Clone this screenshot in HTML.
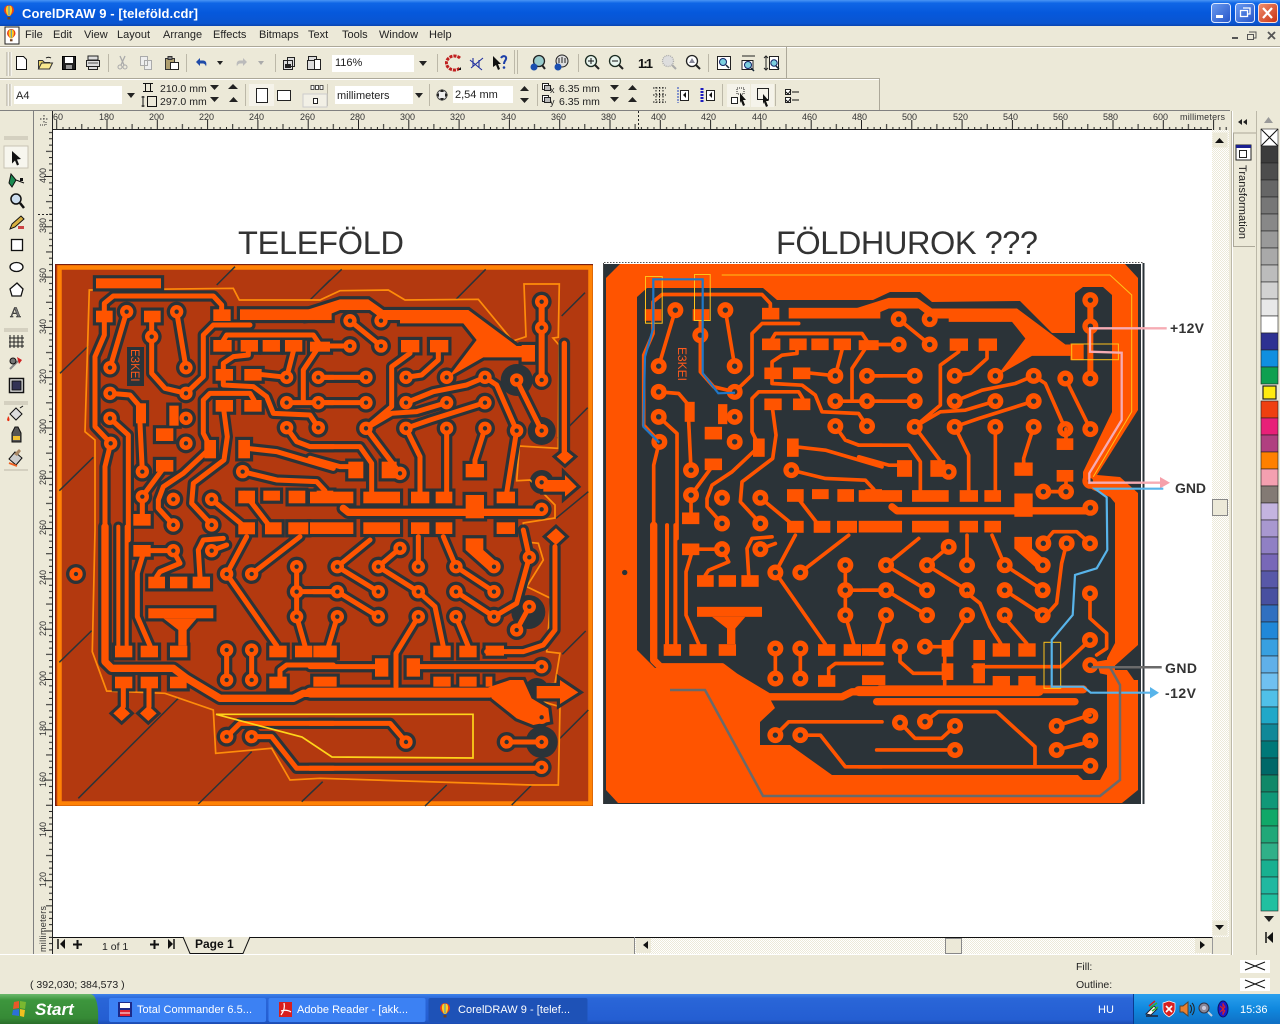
<!DOCTYPE html>
<html><head><meta charset="utf-8"><title>CorelDRAW 9</title>
<style>
html,body{margin:0;padding:0;width:1280px;height:1024px;overflow:hidden;background:#ece9d8}
svg{display:block;font-family:"Liberation Sans",sans-serif}
.m{font-size:11px;fill:#222}
.s{font-size:10.5px;fill:#222}
.r{font-size:9px;fill:#333}
.tg path{fill:none;stroke-width:calc(var(--w,13px) + var(--h));stroke-linecap:round;stroke-linejoin:round}
.tg rect,.tg polygon{stroke-width:var(--h);stroke-linejoin:miter}
.pg circle{r:var(--r)}
</style></head><body>
<svg width="1280" height="1024" viewBox="0 0 1280 1024" xmlns="http://www.w3.org/2000/svg">
<defs>
<linearGradient id="tb" x1="0" y1="0" x2="0" y2="1"><stop offset="0" stop-color="#4a96f5"/><stop offset=".12" stop-color="#0f66e6"/><stop offset=".5" stop-color="#0658dc"/><stop offset=".9" stop-color="#0a55d0"/><stop offset="1" stop-color="#0a44b0"/></linearGradient>
<linearGradient id="tk" x1="0" y1="0" x2="0" y2="1"><stop offset="0" stop-color="#3e82ea"/><stop offset=".15" stop-color="#2a66d8"/><stop offset=".85" stop-color="#245ed2"/><stop offset="1" stop-color="#1c4cb0"/></linearGradient>
<linearGradient id="tr2" x1="0" y1="0" x2="0" y2="1"><stop offset="0" stop-color="#2aa0ee"/><stop offset=".5" stop-color="#1088de"/><stop offset="1" stop-color="#0f6fc4"/></linearGradient>
<linearGradient id="st" x1="0" y1="0" x2="0" y2="1"><stop offset="0" stop-color="#6cb96c"/><stop offset=".2" stop-color="#3d963d"/><stop offset=".8" stop-color="#368a36"/><stop offset="1" stop-color="#2a6e2a"/></linearGradient>
<linearGradient id="bb" x1="0" y1="0" x2="1" y2="1"><stop offset="0" stop-color="#6c9cf0"/><stop offset="1" stop-color="#2554c8"/></linearGradient>
<linearGradient id="br" x1="0" y1="0" x2="1" y2="1"><stop offset="0" stop-color="#f09070"/><stop offset="1" stop-color="#c83010"/></linearGradient>
<pattern id="ht" width="2" height="2" patternUnits="userSpaceOnUse"><rect width="2" height="2" fill="#fff"/><rect width="1" height="1" fill="#ece9d8"/><rect x="1" y="1" width="1" height="1" fill="#ece9d8"/></pattern>
<pattern id="rh" x="56.2" y="111" width="50.3" height="19" patternUnits="userSpaceOnUse">
<path d="M.5 9V19M6.8 16V19M13.1 16V19M19.4 16V19M25.6 13V19M31.9 16V19M38.2 16V19M44.5 16V19" stroke="#222" stroke-width="1" fill="none"/></pattern>
<pattern id="rv" x="38" y="176" width="14" height="50.3" patternUnits="userSpaceOnUse">
<path d="M6 .5H14M11 6.8H14M11 13.1H14M11 19.4H14M8 25.6H14M11 31.9H14M11 38.2H14M11 44.5H14" stroke="#222" stroke-width="1" fill="none"/></pattern>

<g id="bal"><path d="M0 5a5 5 0 0 1 10 0c0 3-3 5-4 6H4C3 10 0 8 0 5z" fill="#e8401a"/><path d="M3 1c-2 3-1 7 1 10h2c2-3 3-7 1-10z" fill="#ffd020"/><path d="M4.500 .5v10h1v-10z" fill="#3090e0"/><rect x="3.500" y="12" width="3" height="2.500" fill="#704020"/></g>

<g id="pd" class="pg">
<g transform="translate(50 260) scale(.3333)">
<circle cx="230" cy="155"/><circle cx="380" cy="155"/><circle cx="305" cy="230"/><circle cx="180" cy="323"/><circle cx="408" cy="323"/><circle cx="180" cy="400"/><circle cx="408" cy="400"/><circle cx="180" cy="475"/><circle cx="408" cy="475"/><circle cx="182" cy="550"/><circle cx="408" cy="550"/><circle cx="277" cy="635"/><circle cx="277" cy="710"/><circle cx="370" cy="718"/><circle cx="485" cy="718"/><circle cx="370" cy="795"/><circle cx="485" cy="795"/><circle cx="710" cy="352"/><circle cx="805" cy="352"/><circle cx="710" cy="428"/><circle cx="805" cy="428"/><circle cx="710" cy="503"/><circle cx="805" cy="503"/><circle cx="578" cy="635"/>
</g>
<g transform="translate(320 260) scale(.3333)">
<circle cx="90" cy="182"/><circle cx="183" cy="182"/><circle cx="90" cy="258"/><circle cx="183" cy="258"/><circle cx="138" cy="352"/><circle cx="138" cy="428"/><circle cx="138" cy="505"/><circle cx="258" cy="352"/><circle cx="380" cy="352"/><circle cx="495" cy="352"/><circle cx="590" cy="360"/><circle cx="665" cy="360"/><circle cx="665" cy="125"/><circle cx="665" cy="203"/><circle cx="258" cy="428"/><circle cx="380" cy="428"/><circle cx="495" cy="428"/><circle cx="258" cy="505"/><circle cx="380" cy="505"/><circle cx="495" cy="505"/><circle cx="590" cy="512"/><circle cx="665" cy="512"/><circle cx="240" cy="640"/><circle cx="665" cy="667"/><circle cx="665" cy="748"/>
</g>
<g transform="translate(50 530) scale(.3333)">
<circle cx="78" cy="132"/><circle cx="370" cy="62"/><circle cx="485" cy="62"/><circle cx="530" cy="132"/><circle cx="605" cy="132"/><circle cx="740" cy="110"/><circle cx="740" cy="185"/><circle cx="740" cy="260"/><circle cx="530" cy="360"/><circle cx="605" cy="360"/><circle cx="530" cy="450"/><circle cx="605" cy="450"/><circle cx="530" cy="620"/><circle cx="605" cy="620"/>
</g>
<g transform="translate(320 530) scale(.3333)">
<circle cx="52" cy="110"/><circle cx="175" cy="110"/><circle cx="240" cy="55"/><circle cx="295" cy="110"/><circle cx="408" cy="110"/><circle cx="522" cy="110"/><circle cx="52" cy="185"/><circle cx="175" cy="185"/><circle cx="295" cy="185"/><circle cx="408" cy="185"/><circle cx="522" cy="185"/><circle cx="52" cy="260"/><circle cx="175" cy="260"/><circle cx="295" cy="260"/><circle cx="408" cy="260"/><circle cx="522" cy="260"/><circle cx="665" cy="410"/><circle cx="665" cy="562"/><circle cx="665" cy="636"/><circle cx="665" cy="712"/>
</g>
</g>
<g id="pdL" class="pg"><g transform="translate(320 530) scale(.3333)"><circle cx="628" cy="82"/><circle cx="628" cy="230"/><circle cx="590" cy="300"/><circle cx="560" cy="636"/><circle cx="258" cy="636"/></g></g>
<g id="pdR" class="pg">
<g transform="translate(880 530) scale(.3333)"><circle cx="60" cy="350"/><circle cx="135" cy="350"/><circle cx="630" cy="190"/><circle cx="630" cy="330"/><circle cx="490" cy="40"/><circle cx="560" cy="40"/><circle cx="630" cy="40"/><circle cx="60" cy="578"/><circle cx="135" cy="575"/><circle cx="225" cy="588"/><circle cx="225" cy="660"/><circle cx="530" cy="588"/><circle cx="530" cy="660"/></g>
<g transform="translate(880 260) scale(.3333)"><circle cx="490" cy="695"/><circle cx="558" cy="695"/></g>
</g>

<g id="tr" class="tg">
<g transform="translate(50 260) scale(.3333)">
<path d="M230 155L180 323M380 155L408 323M305 165V340L345 385L408 400M408 400L460 350V225L490 195H600M163 170V130L190 108H490L515 135V150M163 185V225L135 290V500L182 550M180 400L240 405L270 440V490L277 635M180 475L235 525V840M182 550L165 620V840M345 618L277 710V775M520 440L532 530L522 600L430 670L425 730L485 795M480 565L400 640L340 680L325 720V745L370 795M480 560L460 520V420L480 400H600L612 420M485 718L590 805M583 700L660 800M520 345V375L610 380L650 410L670 460L780 465L805 503M520 340V310L550 290L595 285V255M515 250L530 225H790L810 255M600 340L710 352L735 255M710 428H850M760 420V330L800 270M805 352H850M710 503L740 545L780 560H850M590 565L680 575L850 625M578 635L680 660L800 665L825 692"/>
<rect x="138" y="55" width="195" height="30"/><rect x="138" y="152" width="50" height="35"/><rect x="282" y="152" width="50" height="35"/><rect x="490" y="148" width="52" height="35"/><rect x="570" y="148" width="275" height="32"/>
<rect x="490" y="240" width="55" height="35"/><rect x="572" y="240" width="52" height="35"/><rect x="638" y="240" width="52" height="35"/><rect x="705" y="240" width="52" height="35"/><rect x="780" y="245" width="60" height="30"/>
<rect x="497" y="327" width="52" height="35"/><rect x="583" y="327" width="52" height="35"/><rect x="497" y="420" width="52" height="35"/><rect x="583" y="420" width="52" height="35"/>
<rect x="258" y="430" width="30" height="60"/><rect x="358" y="437" width="28" height="60"/><rect x="318" y="505" width="52" height="38"/><rect x="463" y="540" width="35" height="55"/><rect x="565" y="540" width="35" height="55"/><rect x="318" y="600" width="52" height="35"/><rect x="250" y="762" width="52" height="35"/>
<rect x="565" y="692" width="50" height="38"/><rect x="640" y="692" width="50" height="30"/><rect x="716" y="692" width="50" height="38"/><rect x="800" y="692" width="50" height="30"/><rect x="565" y="787" width="50" height="36"/><rect x="645" y="787" width="50" height="36"/><rect x="715" y="787" width="60" height="36"/>
</g>
<g transform="translate(320 260) scale(.3333)">
<polygon points="-40,150 60,118 145,118 190,150 445,150 590,258 640,258 640,292 490,292 385,352 470,240 430,190 240,190 240,180 190,180 150,150 60,150 0,175 -40,180"/>
<path d="M90 182L183 258M0 258H90M0 352H138M0 428H138M258 352L305 345L355 300V262M270 262V280L215 320V440L138 505M138 505L215 460L290 455L380 428M258 505L330 480L495 428M258 428L340 395L440 375L495 352M495 352L530 375L590 512M590 360L665 512M380 505V700M495 505L465 600V630M258 505L300 590V700M138 505L240 640M-30 595L60 620H100M-30 560H120L155 610V700"/>
<path style="--w:18px" d="M665 125V360"/><path style="--w:22px" d="M70 745L85 757H665"/>
<rect x="243" y="240" width="55" height="37"/><rect x="330" y="240" width="55" height="37"/><rect x="85" y="605" width="45" height="50"/><rect x="185" y="605" width="45" height="50"/><rect x="437" y="612" width="55" height="40"/><rect x="130" y="695" width="110" height="35"/><rect x="273" y="695" width="55" height="35"/><rect x="347" y="695" width="50" height="35"/><rect x="-30" y="695" width="130" height="35"/><rect x="437" y="705" width="55" height="70"/><rect x="-30" y="787" width="130" height="35"/><rect x="130" y="787" width="110" height="35"/><rect x="273" y="787" width="55" height="35"/><rect x="347" y="787" width="50" height="35"/><rect x="605" y="255" width="40" height="50"/>
</g>
<g transform="translate(50 530) scale(.3333)">
<path style="--w:22px" d="M165 -10V395L185 415H370L410 445L510 505H730L760 490H850"/>
<path style="--w:12px" d="M205 -10V347M230 -10V347"/>
<path d="M277 80L262 130V260L300 347M285 62H370M370 62L390 100L330 125L320 140M450 140L445 60L460 30L520 25M485 62L530 45M530 132L680 347M605 132L750 20M530 132L590 20M530 360V450M605 360V450M740 110V260M740 185H850M740 260L765 347M690 440V420L710 405H850M530 620L570 580H850M605 620H665L740 715H850M220 475V530M297 475V530"/>
<rect x="250" y="45" width="52" height="35"/><rect x="295" y="140" width="50" height="35"/><rect x="360" y="140" width="52" height="35"/><rect x="428" y="140" width="52" height="35"/><rect x="295" y="235" width="195" height="30"/>
<polygon points="340,265 385,300 385,347 410,347 410,300 440,265"/>
<rect x="195" y="347" width="52" height="35"/><rect x="272" y="347" width="52" height="35"/><rect x="360" y="347" width="52" height="35"/><rect x="658" y="347" width="52" height="35"/><rect x="735" y="347" width="52" height="35"/><rect x="810" y="347" width="50" height="35"/><rect x="195" y="440" width="52" height="35"/><rect x="272" y="440" width="52" height="35"/><rect x="360" y="440" width="50" height="35"/><rect x="658" y="440" width="52" height="35"/>
<polygon points="215,527 240,550 215,573 190,550"/><polygon points="295,527 320,550 295,573 270,550"/>
</g>
<g transform="translate(320 530) scale(.3333)">
<path d="M52 110L150 30M52 110L175 185M175 110L295 185M175 110L240 55M295 110V20M408 110L370 20M408 110L522 185M408 185L522 260M52 185L175 260M-20 185H52M295 260L228 370V470M52 260L25 350M-30 715H665"/>
<path style="--w:30px" d="M-30 488H510"/>
<polygon points="437,25 490,25 490,60 535,100 510,125 437,60"/>
<rect x="-20" y="347" width="70" height="35"/><rect x="-20" y="440" width="70" height="30"/>
</g>
</g>

<g id="trL" class="tg">
<g transform="translate(320 260) scale(.3333)">
<path d="M590 512L560 700"/><path style="--w:16px" d="M733 250V580"/>
<rect x="530" y="695" width="55" height="35"/><rect x="530" y="787" width="55" height="35"/>
<polygon points="735,570 760,590 735,612 710,590"/><polygon points="670,660 735,660 735,645 770,680 735,710 735,695 670,695"/><polygon points="708,805 735,830 708,855 680,830"/>
</g>
<g transform="translate(320 530) scale(.3333)">
<path d="M295 185L345 230L370 350M522 260L590 220L628 82M628 82L610 0M590 300L628 230M665 636H560M-30 580H210L258 636M-30 410H165M300 410H665M705 50V300L670 345L610 365H500M408 260L445 350"/>
<polygon points="505,472 570,450 610,450 635,505 685,535 690,575 640,585 590,565 515,505"/>
<polygon points="650,468 720,468 720,450 775,487 720,522 720,505 650,505"/>
<rect x="165" y="385" width="40" height="55"/><rect x="260" y="385" width="40" height="55"/><rect x="340" y="347" width="52" height="35"/><rect x="418" y="347" width="52" height="35"/><rect x="497" y="347" width="55" height="30"/><rect x="340" y="440" width="52" height="30"/><rect x="418" y="440" width="52" height="30"/><rect x="497" y="440" width="20" height="30"/>
</g>
</g>

<g id="trR" class="tg">
<g transform="translate(880 530) scale(.3333)">
<path d="M60 350V395L100 430H185M135 350H185M280 410H545L630 330M630 190V265L680 310V355L650 375M262 190L300 220L330 290L362 340M375 265L440 340M490 265L530 220L545 100L560 40M490 40L520 5H590L630 40M530 588L630 555M530 660L630 635M465 708V650L350 545H175L135 575M60 578L105 625H185L225 588M-10 660H225"/>
<path style="--w:22px" d="M-10 515H585"/><path style="--w:24px" d="M0 478H610"/>
<rect x="185" y="330" width="35" height="50"/><rect x="185" y="400" width="35" height="50"/><rect x="280" y="330" width="35" height="60"/><rect x="280" y="400" width="35" height="60"/>
<rect x="338" y="340" width="52" height="40"/><rect x="415" y="340" width="52" height="40"/><rect x="338" y="438" width="52" height="30"/><rect x="415" y="438" width="52" height="30"/>
<polygon points="650,395 705,385 705,440 660,430"/>
</g>
<g transform="translate(880 260) scale(.3333)">
<path d="M490 695H558V660M558 507V540"/>
<rect x="530" y="535" width="50" height="35"/><rect x="530" y="630" width="50" height="35"/>
</g>
</g>
</defs>

<!-- window background -->
<rect width="1280" height="1024" fill="#ece9d8"/>
<rect width="1280" height="26" fill="url(#tb)"/>
<use href="#bal" transform="translate(4 5)"/>
<text x="22" y="18" font-size="13" font-weight="bold" fill="#fff" textLength="176">CorelDRAW 9 - [teleföld.cdr]</text>
<!-- caption buttons -->
<rect x="1211.500" y="3.500" width="19" height="19" rx="3" fill="url(#bb)" stroke="#dde8ff"/><rect x="1216" y="15" width="7" height="3" fill="#fff"/>
<rect x="1235.500" y="3.500" width="19" height="19" rx="3" fill="url(#bb)" stroke="#dde8ff"/><path d="M1243 8h7v6h-2M1240.500 10.500h7v6h-7z" fill="none" stroke="#fff" stroke-width="1.300"/>
<rect x="1258.500" y="3.500" width="19" height="19" rx="3" fill="url(#br)" stroke="#ffdcd0"/><path d="M1263 8l9 10M1272 8l-9 10" stroke="#fff" stroke-width="2.200"/>

<!-- menu -->
<rect x="0" y="26" width="1280" height="20" fill="#ece9d8"/>
<rect x="5" y="27" width="14" height="17" fill="#fff" stroke="#222"/><use href="#bal" transform="translate(7 29) scale(.85)"/>
<text class="m" x="25" y="38">File</text><text class="m" x="53" y="38">Edit</text><text class="m" x="84" y="38">View</text><text class="m" x="117" y="38">Layout</text><text class="m" x="163" y="38">Arrange</text><text class="m" x="213" y="38">Effects</text><text class="m" x="259" y="38">Bitmaps</text><text class="m" x="308" y="38">Text</text><text class="m" x="342" y="38">Tools</text><text class="m" x="379" y="38">Window</text><text class="m" x="429" y="38">Help</text>
<path d="M1232 37h6v2h-6z" fill="#555"/><path d="M1249 32h7v6h-3M1247.500 34.500h6v5h-6z" fill="none" stroke="#555"/><path d="M1268 32l7 7M1275 32l-7 7" stroke="#555" stroke-width="1.800"/>
<path d="M0 46.500H1280" stroke="#aca899"/><path d="M0 47.500H1280" stroke="#fff"/>

<!-- toolbar bands -->
<path d="M786.500 47V78" stroke="#aca899"/><path d="M0 78.500H880" stroke="#aca899"/><path d="M0 79.500H879" stroke="#fff"/><path d="M879.500 79V110" stroke="#aca899"/>
<path d="M7 52v24M10 52v24M7 84v22M10 84v22" stroke="#aca899"/><path d="M8 52v24M11 52v24M8 84v22M11 84v22" stroke="#fff"/>
<path d="M0 110.500H1230" stroke="#808080"/><path d="M108.500 54V72M186.500 54V72M275.500 54V72M437.500 54V72M514.500 50V74M517.500 50V74M578.500 54V72M708.500 54V72M245.500 84V106M429.500 84V106M327.500 84V106M537.500 84V106M722.500 84V106M775.500 84V106" stroke="#bcb8a8"/>

<!-- row1 icons -->
<path d="M16.500 56.500h7l3 3v10h-10z" fill="#fff" stroke="#111"/>
<path d="M38.500 68.500v-8h4l2 2h5v6z" fill="#e8d060" stroke="#333"/><path d="M38.500 69l3-6h11l-3 6z" fill="#f8e890" stroke="#333"/><path d="M46 58a4 3 0 0 1 5 0" stroke="#111" fill="none"/>
<rect x="62.500" y="56.500" width="13" height="13" fill="#222" stroke="#000"/><rect x="65" y="57" width="8" height="6" fill="#fff"/><rect x="66" y="65" width="6" height="4" fill="#999"/>
<path d="M88 60h10v-4h-10zM86.500 60.500h13v6h-13zM88.500 66.500h9v3h-9z" fill="#ddd" stroke="#222"/><path d="M88 63h10" stroke="#555"/>
<path d="M120 56l4 9M125 56l-4 9" stroke="#aaa" stroke-width="1.300"/><circle cx="120" cy="67" r="2" fill="none" stroke="#aaa"/><circle cx="125" cy="67" r="2" fill="none" stroke="#aaa"/>
<path d="M140.500 56.500h7v9h-7zM144.500 60.500h7v9h-7z" fill="#eee" stroke="#aaa"/>
<path d="M165.500 58.500h9v11h-9z" fill="#b0a070" stroke="#333"/><path d="M168 56.500h4v3h-4z" fill="#888" stroke="#333"/><path d="M170.500 62.500h8v7h-8z" fill="#fff" stroke="#222"/>
<path d="M196 62l4-4v2.500h3c3 0 4 2.500 3 6-.5-2-2-3-3-3h-3V66z" fill="#1f4aa8"/><path d="M217 61h6l-3 4z" fill="#222"/>
<path d="M247 62l-4-4v2.500h-3c-3 0-4 2.500-3 6 .5-2 2-3 3-3h3V66z" fill="#bbb"/><path d="M258 61h6l-3 4z" fill="#aaa"/>
<path d="M287.500 57.500h7v9h-7zM283.500 60.500h9v9h-9z" fill="#ddd" stroke="#222"/><path d="M285 64h6v4h-6z" fill="#222"/>
<path d="M308.500 56.500h8v4h-8zM307.500 60.500h10v9h-10z" fill="#ddd" stroke="#222"/><path d="M314.500 59.500h6v10h-6z" fill="#fff" stroke="#222"/>
<!-- zoom combo -->
<rect x="332" y="55" width="82" height="17" fill="#fff"/><text class="m" x="335" y="66">116%</text><rect x="415" y="55" width="15" height="17" fill="#ece9d8"/><path d="M419 61h8l-4 5z" fill="#222"/>
<path d="M460 58a8 7 0 1 0 0 10" fill="none" stroke="#c02020" stroke-width="3" stroke-dasharray="3 1"/><path d="M458 70h3v-3z" fill="#111"/>
<path d="M470 60l12 10M483 58l-12 10M473 58v8M479 60v8" stroke="#2030a0" fill="none" stroke-width="1.100"/>
<path d="M493 56l8 8-3 0 2 5-2 1-2-5-3 2z" fill="#111"/><path d="M501 58c2-3 6-2 5 1-.5 2-2 2-2 5" fill="none" stroke="#1c3fa8" stroke-width="2"/><circle cx="504" cy="67.500" r="1.300" fill="#1c3fa8"/>
<circle cx="539" cy="61" r="5.500" fill="#9cc" stroke="#222" stroke-width="1.300"/><path d="M542 65l3 4" stroke="#222" stroke-width="2"/><circle cx="534" cy="67" r="3.500" fill="#1a4fb0"/>
<circle cx="562" cy="61" r="6" fill="#ddd" stroke="#222"/><path d="M559 58v5M562 57v6M565 58v5" stroke="#222"/><circle cx="558" cy="67" r="3.500" fill="#1a4fb0"/>
<circle cx="591" cy="61" r="5.500" fill="#e8f4ee" stroke="#1a2a20" stroke-width="1.300"/><path d="M595 65l4 4" stroke="#222" stroke-width="2"/><path d="M588 61h6M591 58v6" stroke="#111"/>
<circle cx="615" cy="61" r="5.500" fill="#e8f4ee" stroke="#1a2a20" stroke-width="1.300"/><path d="M619 65l4 4" stroke="#222" stroke-width="2"/><path d="M612 61h6" stroke="#111"/>
<text x="638" y="68" font-size="13" font-weight="bold" fill="#111" textLength="15">1:1</text>
<circle cx="668" cy="61" r="5.500" fill="#ddd" stroke="#aaa" stroke-width="1.300" stroke-dasharray="1 1"/><path d="M672 65l4 4" stroke="#aaa" stroke-width="2"/>
<circle cx="692" cy="61" r="5.500" fill="#fff" stroke="#222" stroke-width="1.300"/><path d="M696 65l4 4" stroke="#222" stroke-width="2"/><path d="M689 63l3-5 3 5z" fill="#889"/>
<rect x="717.500" y="56.500" width="13" height="13" fill="#fff" stroke="#222"/><circle cx="723" cy="62" r="3.500" fill="#7cd0e0" stroke="#126"/><path d="M726 65l3 3" stroke="#123" stroke-width="1.500"/>
<path d="M742 56h13M742 60.500h11v9h-11z" fill="#fff" stroke="#222"/><circle cx="748" cy="65" r="3.500" fill="#7cd0e0" stroke="#126"/><path d="M751 68l3 3" stroke="#123" stroke-width="1.500"/>
<path d="M766 56v14M764 58l2-2 2 2M764 68l2 2 2-2" fill="none" stroke="#222"/><rect x="769.500" y="56.500" width="9" height="13" fill="#fff" stroke="#222"/><circle cx="774" cy="63" r="3.200" fill="#7cd0e0" stroke="#126"/><path d="M776 66l3 3" stroke="#123" stroke-width="1.500"/>

<!-- row2 -->
<rect x="14" y="86" width="108" height="18" fill="#fff"/><text class="m" x="16" y="99">A4</text><path d="M127 93h8l-4 5z" fill="#222"/>
<path d="M143 83.500h10M143 91.500h10M145.500 84v8M150.500 84v8" stroke="#111" fill="none"/>
<path d="M143 96v11M141.500 97h3M141.500 106h3" stroke="#111"/><rect x="147.500" y="96.500" width="9" height="10" fill="none" stroke="#111"/>
<text class="s" x="160" y="92">210.0 mm</text><text class="s" x="160" y="105">297.0 mm</text>
<path d="M228 89h10l-5-5z" fill="#222"/><path d="M210 85h9l-4.500 5z" fill="#222"/><path d="M229 102h9l-4.500-5zM210 97h9l-4.500 5z" fill="#222"/>
<rect x="249" y="84" width="25" height="22" fill="#f5f3ea"/><rect x="256.500" y="88.500" width="11" height="14" fill="#fff" stroke="#222"/><rect x="277.500" y="90.500" width="13" height="10" fill="#fff" stroke="#222"/>
<path d="M311 85.500h3v4h-3zM315.500 85.500h3v4h-3zM320 85.500h3v4h-3z" fill="#fff" stroke="#222" stroke-width=".8"/><rect x="303" y="94" width="24" height="13" fill="#f2f0e6" stroke="#ccc"/><rect x="313.500" y="98.500" width="4" height="5" fill="#fff" stroke="#222"/>
<rect x="335" y="86" width="78" height="18" fill="#fff"/><text class="m" x="337" y="99">millimeters</text><path d="M415 93h8l-4 5z" fill="#222"/>
<circle cx="442" cy="95" r="5" fill="#eee" stroke="#444"/><path d="M442 89l-2 3h4zM442 101l-2-3h4zM436 95l3-2v4zM448 95l-3-2v4z" fill="#222"/>
<rect x="453" y="86" width="60" height="17" fill="#fff"/><text class="m" x="455" y="98">2,54 mm</text>
<path d="M520 91h9l-4.500-5zM520 98h9l-4.500 5z" fill="#222"/>
<rect x="542.500" y="83.500" width="6" height="6" fill="#fff" stroke="#222"/><rect x="544.500" y="85.500" width="6" height="5" fill="#bbb" stroke="#222"/><text class="s" x="550" y="93" style="font-size:9px">x</text>
<rect x="542.500" y="95.500" width="6" height="6" fill="#fff" stroke="#222"/><rect x="544.500" y="97.500" width="6" height="5" fill="#bbb" stroke="#222"/><text class="s" x="550" y="105" style="font-size:9px">y</text>
<text class="s" x="559" y="92">6.35 mm</text><text class="s" x="559" y="105">6.35 mm</text>
<path d="M610 85h9l-4.500 5zM628 90h9l-4.500-5zM610 97h9l-4.500 5zM628 102h9l-4.500-5z" fill="#222"/>
<path d="M653 88h13M653 95h13M653 102h13M656 87v16M659.500 87v16M663 87v16" stroke="#111" stroke-dasharray="1.500 1.500" fill="none"/>
<path d="M678 87v16" stroke="#1c3fc0" stroke-dasharray="2 1"/><rect x="680.500" y="90.500" width="8" height="10" fill="#fff" stroke="#222"/><path d="M686 92l-3 3 3 3z" fill="#111"/>
<path d="M702 88v15" stroke="#1c1cc0" stroke-width="3" stroke-dasharray="2 1"/><rect x="706.500" y="90.500" width="8" height="10" fill="#fff" stroke="#222"/><path d="M712 92l-3 3 3 3z" fill="#111"/>
<rect x="727" y="84" width="23" height="23" fill="#f5f3ea"/><rect x="751" y="84" width="23" height="23" fill="#f5f3ea"/>
<rect x="731.500" y="97.500" width="6" height="6" fill="#fff" stroke="#222"/><rect x="737" y="88" width="7" height="6" fill="none" stroke="#222" stroke-dasharray="1 1"/><path d="M740 93l6 7h-3l2 5-2 1-2-5-1 2z" fill="#111"/>
<rect x="757.500" y="88.500" width="11" height="11" fill="none" stroke="#222"/><path d="M763 94l6 7h-3l2 5-2 1-2-5-1 2z" fill="#111"/>
<rect x="785.500" y="89.500" width="5" height="5" fill="#fff" stroke="#222"/><rect x="785.500" y="97.500" width="5" height="5" fill="#fff" stroke="#222"/><path d="M786 92l2 2 3-4M786 100l2 2 3-4M792 92h7M792 100h7" stroke="#111" fill="none"/>

<!-- rulers -->
<rect x="33" y="111" width="1197" height="19" fill="#ece9d8"/>
<rect x="52" y="111" width="1178" height="19" fill="url(#rh)"/>
<rect x="33" y="111" width="19" height="845" fill="#ece9d8"/>
<rect x="38" y="130" width="14" height="824" fill="url(#rv)"/>
<path d="M33.500 111V955" stroke="#808080"/><path d="M52.500 111V954" stroke="#222"/><path d="M52 129.500H1212" stroke="#222"/>
<path d="M40 119h8M44 115v8" stroke="#333" stroke-dasharray="1.500 1.500"/><path d="M40 125h6v-4" stroke="#333" fill="none" stroke-dasharray="1 1"/>
<path d="M638.500 111V130" stroke="#222" stroke-dasharray="2 2"/><path d="M38 214.500H52" stroke="#222" stroke-dasharray="2 2"/>
<g class="r">
<text class="r" x="53" y="120">60</text><text class="r" x="99" y="120">180</text><text class="r" x="149" y="120">200</text><text class="r" x="199" y="120">220</text><text class="r" x="249" y="120">240</text><text class="r" x="300" y="120">260</text><text class="r" x="350" y="120">280</text><text class="r" x="400" y="120">300</text><text class="r" x="450" y="120">320</text><text class="r" x="501" y="120">340</text><text class="r" x="551" y="120">360</text><text class="r" x="601" y="120">380</text><text class="r" x="651" y="120">400</text><text class="r" x="701" y="120">420</text><text class="r" x="752" y="120">440</text><text class="r" x="802" y="120">460</text><text class="r" x="852" y="120">480</text><text class="r" x="902" y="120">500</text><text class="r" x="953" y="120">520</text><text class="r" x="1003" y="120">540</text><text class="r" x="1053" y="120">560</text><text class="r" x="1103" y="120">580</text><text class="r" x="1153" y="120">600</text><text class="r" x="1180" y="120" textLength="45">millimeters</text>
<text class="r" transform="translate(46 183) rotate(-90)">400</text><text class="r" transform="translate(46 233) rotate(-90)">380</text><text class="r" transform="translate(46 283) rotate(-90)">360</text><text class="r" transform="translate(46 334) rotate(-90)">340</text><text class="r" transform="translate(46 384) rotate(-90)">320</text><text class="r" transform="translate(46 434) rotate(-90)">300</text><text class="r" transform="translate(46 485) rotate(-90)">280</text><text class="r" transform="translate(46 535) rotate(-90)">260</text><text class="r" transform="translate(46 585) rotate(-90)">240</text><text class="r" transform="translate(46 636) rotate(-90)">220</text><text class="r" transform="translate(46 686) rotate(-90)">200</text><text class="r" transform="translate(46 736) rotate(-90)">180</text><text class="r" transform="translate(46 787) rotate(-90)">160</text><text class="r" transform="translate(46 837) rotate(-90)">140</text><text class="r" transform="translate(46 887) rotate(-90)">120</text><text class="r" transform="translate(46 952) rotate(-90)" textLength="46">millimeters</text>
</g>

<!-- canvas -->
<rect x="53" y="130" width="1159" height="807" fill="#fff"/>
<text x="238" y="254" font-size="32.500" fill="#333" textLength="166">TELEFÖLD</text>
<text x="776" y="254" font-size="32.500" fill="#333" textLength="262">FÖLDHUROK ???</text>
<path d="M604 262.500H1144" stroke="#555" stroke-dasharray="1.500 1.500"/>

<!-- LEFT BOARD -->
<rect x="55.500" y="264.500" width="537" height="541" fill="#b3390f" stroke="#7a1f10"/>
<rect x="59.500" y="267.500" width="531" height="536" fill="none" stroke="#ff8205" stroke-width="4.500"/>
<path d="M88.300 346L60 373.300M93.300 457.300L59.300 490.700M235 266.700L216.700 285M330 280L310 300M341.700 269.300L320 290M485.700 269.300L456 299.300M585 292.700L561.700 316M587.700 407.700L557.300 438.300M588.300 491.700L556 518.300M91.700 630.700L59.300 662.300M178.300 698.300L78.300 798.300M251.700 751.700L198.300 804M322.700 781.700L301.700 801.700M585.700 631L562.300 654.300M588.300 710L560 738.300M446.700 785L425 806M531.700 785L511.700 805" stroke="#2b3338" stroke-width="1.500"/>
<g fill="#2b3338"><circle cx="516.700" cy="380" r="16"/><circle cx="541.700" cy="431" r="14"/><circle cx="528.300" cy="612" r="17"/><circle cx="541.700" cy="742" r="16"/><circle cx="536.700" cy="690" r="12"/><circle cx="541.700" cy="482" r="12"/></g>
<polygon fill="none" stroke="#ff8c0a" stroke-width="1.700" points="89.300,290 233.300,288.300 239.300,300 320,300 340,290.700 388.300,290 405,300 478.300,299.300 512.700,341 526,336.700 524,284 559.300,284 558.300,337.300 553,338 559,345 558.300,448.300 519.300,446 516.700,480.700 530,480 555,505 555,518 523.300,523 523.300,541.700 538.300,543.300 543.300,560 526.700,586.700 550.700,598.300 546.700,651.700 560,653.300 555,683.300 536.700,685 536.700,700 560,706.700 558.300,785 531.700,785 320,778.300 290,780 271.700,748.300 215.700,753.300 213.300,710 165,693.300 106.700,691 92.300,651.700 95,530 95,440 85,431.700"/>
<use href="#tr" style="--h:19px;--w:15px" stroke="#2b3338" fill="#2b3338"/>
<use href="#trL" style="--h:19px;--w:15px" stroke="#2b3338" fill="#2b3338"/>
<use href="#pd" style="--r:30px" fill="#2b3338"/>
<use href="#pdL" style="--r:30px" fill="#2b3338"/>
<rect x="127" y="347" width="17" height="39" fill="#2b3338"/>
<use href="#tr" style="--h:0px;--w:15px" stroke="#ff5400" fill="#ff5400"/>
<use href="#trL" style="--h:0px;--w:15px" stroke="#ff5400" fill="#ff5400"/>
<use href="#pd" style="--r:20px" fill="#ff5400"/>
<use href="#pdL" style="--r:20px" fill="#ff5400"/>
<use href="#pd" style="--r:6.500px" fill="#2b3338"/>
<use href="#pdL" style="--r:6.500px" fill="#2b3338"/>
<text transform="translate(131 349) rotate(90)" font-size="11.500" fill="#ff5a1c">E3KEI</text>
<polygon fill="none" stroke="#ffd51a" stroke-width="1.700" points="216,714.300 473,714.300 473,758 332,757 302,737"/>

<!-- RIGHT BOARD -->
<rect x="604" y="264" width="537" height="540" fill="#2b3338"/>
<path d="M1143.500 263V804" stroke="#2b3338" stroke-width="2"/>
<path d="M603.500 263V804" stroke="#444"/>
<polygon fill="#ff5400" points="620,264 1125,264 1138,278 1138,790 1122,803 618,803 606,790 606,278"/>
<polygon fill="#2b3338" points="637,297 647,288 763,288 777,300 873,300 890,292 920,292 932,302 1020,301 1052,333 1075,333 1075,293 1083,287 1103,287 1112,295 1112,412 1083,472 1083,483 1093,490 1110,497 1115,503 1115,643 1107,658 1107,767 1100,780 1083,780 1078,775 832,775 790,745 760,745 760,722 775,708 769,697 735,680 722,668 655,668 637,650"/>
<polygon fill="#2b3338" points="1138,410 1097,475 1120,477 1138,493"/>
<polygon fill="#2b3338" points="1138,645 1110,670 1127,670 1134,680 1138,680"/>
<g transform="translate(548.700 -1.500)">
<use href="#tr" style="--h:0px;--w:11px" stroke="#ff5400" fill="#ff5400"/>
<use href="#pd" style="--r:24px" fill="#ff5400"/>
<use href="#pd" style="--r:8px" fill="#2b3338"/>
</g>
<use href="#trR" style="--h:0px;--w:11px" stroke="#ff5400" fill="#ff5400"/>
<use href="#pdR" style="--r:24px" fill="#ff5400"/>
<use href="#pdR" style="--r:8px" fill="#2b3338"/>
<text transform="translate(678 347) rotate(90)" font-size="12" fill="#ff5a1c">E3KEI</text>
<!-- overlays -->
<g fill="none" stroke="#ffc21a" stroke-width="1">
<rect x="645.500" y="276.500" width="16.700" height="46.700"/><rect x="694.500" y="274.500" width="15.700" height="46"/><rect x="1071.700" y="344" width="46.700" height="15.700"/><rect x="1044" y="642.300" width="16.700" height="46"/>
<path d="M721.700 275H1110L1131.700 295V411.700L1093.300 476.700"/>
</g>
<path d="M653.300 330V279.300H702.700V373.300L718.300 393.300L735 392.700M653.300 328L645 356.700L643.300 426.700L659.300 442.700" fill="none" stroke="#1f78c8" stroke-width="2.200"/>
<path d="M1166.700 328.300H1090V351.700L1121.700 352.700V420L1089.300 473.300V482.700H1162" fill="none" stroke="#f6acb4" stroke-width="2.300"/><path d="M1160 477l10 5.700-10 5.700z" fill="#f6a0aa"/>
<path d="M1163.300 488.700H1095L1106.700 497.300L1107.300 550L1096.700 568.300L1075 575L1072.700 615L1051.700 640V686.700H1083.300L1090.700 692.700H1152" fill="none" stroke="#58b4ea" stroke-width="2.200"/><path d="M1150 687l9 5.700-9 5.700z" fill="#58b4ea"/>
<path d="M1091.700 667.300H1161.700M1110 667.300L1120 685V780L1100 796H763L705 690H670" fill="none" stroke="#6a6a6a" stroke-width="2.500"/>
<g font-weight="bold" font-size="14" fill="#333"><text x="1170" y="333" textLength="34">+12V</text><text x="1175" y="493" textLength="31">GND</text><text x="1165" y="673" textLength="32">GND</text><text x="1165" y="698" textLength="31">-12V</text></g>

<!-- scrollbars -->
<rect x="1212" y="130" width="17" height="807" fill="url(#ht)"/>
<rect x="1212.500" y="132.500" width="15" height="15" fill="#ece9d8"/><path d="M1215 143h9l-4.500-5z" fill="#111"/>
<rect x="1212.500" y="499.500" width="15" height="16" fill="#ece9d8" stroke="#888"/>
<rect x="1212.500" y="920.500" width="15" height="15" fill="#ece9d8"/><path d="M1215 925h9l-4.500 5z" fill="#111"/>

<!-- tab bar -->
<rect x="53" y="937" width="1177" height="17" fill="#ece9d8"/>
<path d="M53 937.500H183M250 937.500H1212" stroke="#111"/>
<path d="M183 937l7 16.500H243L250 937" fill="#ece9d8" stroke="#111"/>
<path d="M58 939v10" stroke="#111" stroke-width="1.500"/><path d="M65 939l-5 5 5 5z" fill="#111"/><path d="M73 944.500h9M77.500 940v9" stroke="#111" stroke-width="2"/>
<text class="s" x="102" y="950">1 of 1</text>
<path d="M150 944.500h9M154.500 940v9" stroke="#111" stroke-width="2"/><path d="M168 939l5 5-5 5z" fill="#111"/><path d="M174 939v10" stroke="#111" stroke-width="1.500"/>
<text x="195" y="948" font-size="12" font-weight="bold" fill="#111">Page 1</text>
<path d="M634.500 937V954" stroke="#888"/>
<rect x="635" y="938" width="577" height="16" fill="url(#ht)"/>
<rect x="636" y="938" width="15" height="15" fill="#ece9d8"/><path d="M648 941v8l-5-4z" fill="#111"/>
<rect x="945.500" y="938.500" width="16" height="15" fill="#ece9d8" stroke="#888"/>
<rect x="1195" y="938" width="17" height="15" fill="#ece9d8"/><path d="M1200 941v8l5-4z" fill="#111"/>
<path d="M0 954.500H1230" stroke="#fff"/><path d="M1212.500 937v17" stroke="#999"/>

<!-- status -->
<text class="s" x="30" y="988">( 392,030; 384,573 )</text>
<text class="s" x="1076" y="970">Fill:</text><text class="s" x="1076" y="988">Outline:</text>
<rect x="1240" y="960" width="30" height="13" fill="#fff"/><path d="M1245 962l20 8M1265 962l-20 8" stroke="#111"/>
<rect x="1240" y="978" width="30" height="13" fill="#fff"/><path d="M1245 980l20 8M1265 980l-20 8" stroke="#111"/>

<!-- left toolbox -->
<path d="M4 137H28M4 139H28" stroke="#bcb8a8"/>
<rect x="4" y="146" width="24" height="22" fill="#f7f6ee" stroke="#c8c4b4"/>
<path d="M12 151l9 8-4 .5 2 5-2 1-2-5-3 3z" fill="#111"/>
<path d="M11 174l5 6-4 7-3-4zM16 180l8 3" fill="#1a8a50" stroke="#111"/><rect x="20" y="178" width="3" height="3" fill="#111"/>
<circle cx="16" cy="199" r="5" fill="#cde" stroke="#111" stroke-width="1.500"/><path d="M20 203l4 5" stroke="#111" stroke-width="2.500"/>
<path d="M10 229l2-5 9-8 3 3-9 8z" fill="#d8b040" stroke="#111"/><path d="M18 226h6v3h-6z" fill="#c44"/>
<rect x="11.500" y="239.500" width="11" height="11" fill="#fff" stroke="#111" stroke-width="1.300"/>
<ellipse cx="16.500" cy="267" rx="6.500" ry="4.500" fill="#fff" stroke="#111" stroke-width="1.300"/>
<polygon points="17,283 23,289 21,296 12,296 10,289" fill="#fff" stroke="#111" stroke-width="1.300"/>
<text x="10" y="317" font-size="15" font-weight="bold" fill="#777" stroke="#111" stroke-width=".4" font-family="Liberation Serif">A</text>
<path d="M4 329H28M4 331H28" stroke="#bcb8a8"/>
<path d="M10 335v13M14 335v13M18 335v13M22 335v13M9 338h15M9 342h15M9 346h15" stroke="#222" fill="none"/>
<path d="M10 369l8-8" stroke="#888" stroke-width="2"/><circle cx="13" cy="361" r="3" fill="#777" stroke="#111"/><path d="M17 357l5 3-3 4z" fill="#d02020"/>
<rect x="9.500" y="378.500" width="14" height="14" fill="#eee" stroke="#111" stroke-width="1.500"/><rect x="12" y="381" width="9" height="9" fill="#335" stroke="#111"/>
<path d="M4 402H28M4 404H28" stroke="#bcb8a8"/>
<path d="M10 414l6-6 6 6-6 6z" fill="#ddd" stroke="#111"/><path d="M8 416c0 2-2 4 0 5s2-3 0-5z" fill="#e83010"/><path d="M20 408l3-2" stroke="#111"/>
<path d="M12 433l3-6h3l3 6v9h-9z" fill="#555" stroke="#111"/><rect x="13" y="436" width="7" height="4" fill="#f0c030"/>
<path d="M9 459l6-7 7 6-6 7z" fill="#ccc" stroke="#111"/><path d="M14 454l5-5 2 2-4 5z" fill="#a86"/><path d="M9 463l8 3" stroke="#f06020" stroke-width="2"/>
<path d="M4 470H28" stroke="#bcb8a8"/>

<!-- docker -->
<path d="M1231.500 111V955" stroke="#bcb8a8"/><path d="M1232.500 111V955" stroke="#fff"/>
<path d="M1242 119l-4 3 4 3zM1247 119l-4 3 4 3z" fill="#222"/>
<path d="M1233 133H1256" stroke="#aca899"/><path d="M1233.500 133V246.500H1255" fill="none" stroke="#aca899"/>
<rect x="1236" y="145" width="15" height="15" fill="#fff" stroke="#222"/><rect x="1236" y="145" width="15" height="3" fill="#1a2090"/><rect x="1239.500" y="150.500" width="7" height="7" fill="#fff" stroke="#222"/>
<text transform="translate(1239 165) rotate(90)" font-size="11" fill="#222" textLength="74">Transformation</text>
<path d="M1256.500 111V955" stroke="#bcb8a8"/>

<!-- palette -->
<path d="M1264 123h9l-4.500-6z" fill="#999"/>
<g stroke="#222" stroke-width=".6">
<rect x="1261" y="129" width="17" height="17" fill="#fff"/><path d="M1261 129l17 17M1278 129l-17 17" stroke="#111" stroke-width="1"/>
<rect x="1261" y="146" width="17" height="17" fill="#3c3c3c"/><rect x="1261" y="163" width="17" height="17" fill="#4d4d4d"/><rect x="1261" y="180" width="17" height="17" fill="#666"/><rect x="1261" y="197" width="17" height="17" fill="#777"/><rect x="1261" y="214" width="17" height="17" fill="#888"/><rect x="1261" y="231" width="17" height="17" fill="#9a9a9a"/><rect x="1261" y="248" width="17" height="17" fill="#a9a9a9"/><rect x="1261" y="265" width="17" height="17" fill="#bcbcbc"/><rect x="1261" y="282" width="17" height="17" fill="#d2d2d2"/><rect x="1261" y="299" width="17" height="17" fill="#e8e8e8"/><rect x="1261" y="316" width="17" height="17" fill="#fff"/><rect x="1261" y="333" width="17" height="17" fill="#2e3192"/><rect x="1261" y="350" width="17" height="17" fill="#0f8fe0"/><rect x="1261" y="367" width="17" height="17" fill="#0fa050"/>
<rect x="1263" y="386" width="13" height="13" fill="#ffea10" stroke-width="1.200"/>
<rect x="1261" y="401" width="17" height="17" fill="#ef4010"/><rect x="1261" y="418" width="17" height="17" fill="#e82078"/><rect x="1261" y="435" width="17" height="17" fill="#b04080"/><rect x="1261" y="452" width="17" height="17" fill="#ff8000"/><rect x="1261" y="469" width="17" height="17" fill="#f4a0b0"/><rect x="1261" y="486" width="17" height="17" fill="#837a74"/><rect x="1261" y="503" width="17" height="17" fill="#c4b4e0"/>
<rect x="1261" y="520" width="17" height="17" fill="#a898d0"/><rect x="1261" y="537" width="17" height="17" fill="#9080c4"/><rect x="1261" y="554" width="17" height="17" fill="#7868b8"/><rect x="1261" y="571" width="17" height="17" fill="#5858a8"/><rect x="1261" y="588" width="17" height="17" fill="#4850a0"/><rect x="1261" y="605" width="17" height="17" fill="#3070c0"/><rect x="1261" y="622" width="17" height="17" fill="#2088d8"/><rect x="1261" y="639" width="17" height="17" fill="#38a0e0"/><rect x="1261" y="656" width="17" height="17" fill="#60b0e8"/><rect x="1261" y="673" width="17" height="17" fill="#70c0f0"/><rect x="1261" y="690" width="17" height="17" fill="#50c0e8"/><rect x="1261" y="707" width="17" height="17" fill="#20a8c8"/><rect x="1261" y="724" width="17" height="17" fill="#108898"/><rect x="1261" y="741" width="17" height="17" fill="#007878"/><rect x="1261" y="758" width="17" height="17" fill="#006868"/><rect x="1261" y="775" width="17" height="17" fill="#108868"/><rect x="1261" y="792" width="17" height="17" fill="#109878"/><rect x="1261" y="809" width="17" height="17" fill="#10a868"/><rect x="1261" y="826" width="17" height="17" fill="#20a878"/><rect x="1261" y="843" width="17" height="17" fill="#30b088"/><rect x="1261" y="860" width="17" height="17" fill="#18b090"/><rect x="1261" y="877" width="17" height="17" fill="#20b8a0"/><rect x="1261" y="894" width="17" height="17" fill="#20c0a0"/>
</g>
<path d="M1264 916h10l-5 6z" fill="#222"/>
<path d="M1266 932v11" stroke="#111" stroke-width="1.500"/><path d="M1273 932l-6 5.500 6 5.500z" fill="#111"/>

<!-- taskbar -->
<rect x="0" y="994" width="1280" height="30" fill="url(#tk)"/>
<path d="M0 994H90C96 994 99 1005 98 1024H0z" fill="url(#st)"/>
<g transform="translate(10 1001)"><path d="M4 1l5-1v7l-6 1z" fill="#e8582a"/><path d="M10 0l6 1-1 7-5-1z" fill="#7ab830"/><path d="M3 9l6-1v7l-7-1z" fill="#2c70d8"/><path d="M10 8l5 1-1 7-4-1z" fill="#f0c020"/></g>
<text x="35" y="1015" font-size="17" font-weight="bold" font-style="italic" fill="#fff">Start</text>
<rect x="109" y="998" width="157" height="24" rx="2" fill="#3c81f3"/><rect x="268.500" y="998" width="157" height="24" rx="2" fill="#3c81f3"/><rect x="428.500" y="998" width="159" height="24" rx="2" fill="#1e52b7"/>
<rect x="118" y="1002" width="14" height="15" fill="#1c2a8a"/><rect x="120" y="1003" width="10" height="5" fill="#fff"/><rect x="120" y="1010" width="10" height="6" fill="#e02030"/><path d="M120 1013h10" stroke="#fff"/>
<text x="137" y="1013" font-size="11" fill="#fff" textLength="115">Total Commander 6.5...</text>
<path d="M279 1002h13v15h-13z" fill="#d81e1e"/><path d="M281 1015c3-4 4-8 3-12M281 1011c3-1 7-1 10 1" fill="none" stroke="#fff" stroke-width="1.200"/>
<text x="297" y="1013" font-size="11" fill="#fff" textLength="111">Adobe Reader - [akk...</text>
<use href="#bal" transform="translate(440 1003)"/>
<text x="458" y="1013" font-size="11" fill="#fff" textLength="112">CorelDRAW 9 - [telef...</text>
<text x="1098" y="1013" font-size="11" fill="#fff">HU</text>
<rect x="1134" y="994" width="146" height="30" fill="url(#tr2)"/><path d="M1133.500 994V1024" stroke="#0a3a90"/>
<path d="M1146 1014l8-8 3 3-6 6z" fill="#fff" stroke="#223"/><path d="M1150 1008l7-5M1152 1011l6-4" stroke="#30b030" stroke-width="1.500"/><path d="M1149 1006l6-5" stroke="#d02020" stroke-width="1.500"/><path d="M1146 1016h12" stroke="#223" stroke-width="1.500"/>
<path d="M1163 1003l6-2 6 2v6c0 4-3 6-6 8-3-2-6-4-6-8z" fill="#d82020" stroke="#fff" stroke-width=".7"/><path d="M1166 1006l6 6M1172 1006l-6 6" stroke="#fff" stroke-width="1.600"/>
<path d="M1180 1006h3l5-4v14l-5-4h-3z" fill="#e88030" stroke="#543"/><path d="M1190 1005c2 2 2 6 0 8M1192 1003c3 3 3 9 0 12" stroke="#222" fill="none"/>
<circle cx="1204" cy="1008" r="5" fill="#889" stroke="#334"/><circle cx="1204" cy="1008" r="2" fill="#ccd"/><path d="M1208 1012l4 4" stroke="#bcd" stroke-width="2"/>
<ellipse cx="1223" cy="1009" rx="5" ry="8" fill="#1a1ad0" stroke="#101060"/><path d="M1223 1003v12M1220 1006l5 5-2 3M1220 1012l5-5-2-3" stroke="#e02020" fill="none"/>
<text x="1240" y="1013" font-size="11" fill="#fff">15:36</text>
</svg>
</body></html>
